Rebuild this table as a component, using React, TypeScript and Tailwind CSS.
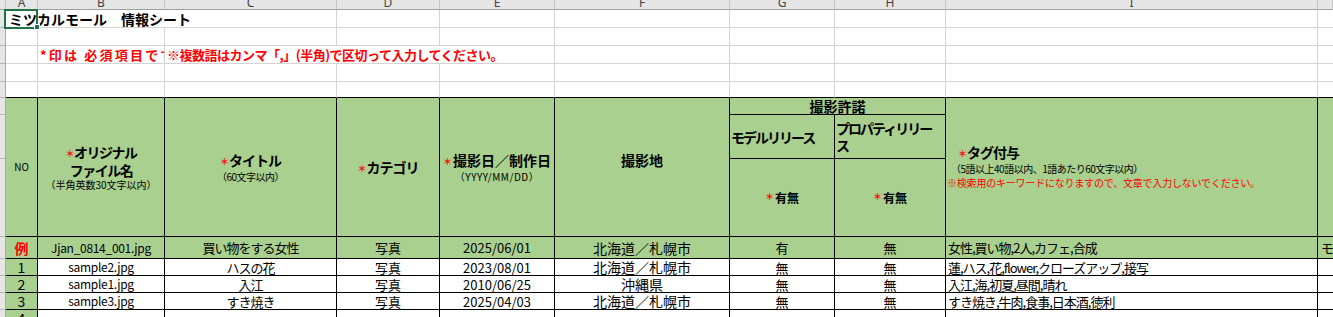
import type { ReactNode } from 'react'

type Row = {
  no: string
  file: string
  title: string
  cat: string
  date: string
  place: string
  model: string
  prop: string
  tags: string
  extra?: string
}

const EXAMPLE: Row = {
  no: '例',
  file: 'Jjan_0814_001.jpg',
  title: '買い物をする女性',
  cat: '写真',
  date: '2025/06/01',
  place: '北海道／札幌市',
  model: '有',
  prop: '無',
  tags: '女性,買い物,2人,カフェ,合成',
  extra: 'モデル',
}

const ROWS: Row[] = [
  { no: '1', file: 'sample2.jpg', title: 'ハスの花', cat: '写真', date: '2023/08/01', place: '北海道／札幌市', model: '無', prop: '無', tags: '蓮,ハス,花,flower,クローズアップ,接写' },
  { no: '2', file: 'sample1.jpg', title: '入江', cat: '写真', date: '2010/06/25', place: '沖縄県', model: '無', prop: '無', tags: '入江,海,初夏,昼間,晴れ' },
  { no: '3', file: 'sample3.jpg', title: 'すき焼き', cat: '写真', date: '2025/04/03', place: '北海道／札幌市', model: '無', prop: '無', tags: 'すき焼き,牛肉,食事,日本酒,徳利' },
]

const LETTERS = ['A', 'B', 'C', 'D', 'E', 'F', 'G', 'H', 'I', '']

const GRID = 'border-r border-b border-[#d4d4d4]'
const CELL = 'border-r border-b border-black'

function Strip() {
  return <div className="bg-[#e6e6e6] border-r border-b border-r-[#a8a8a8] border-b-[#b4b4b4]" />
}

function Star() {
  return <span className="text-[#ff0000] text-[9px] font-bold mr-[1px] relative -top-[1px]">＊</span>
}

function Blank({ cls = GRID }: { cls?: string }) {
  return <div className={cls} />
}

function HeadCell({ children, className = '' }: { children?: ReactNode; className?: string }) {
  return <div className={`row-span-3 bg-[#a9d08e] ${CELL} flex flex-col items-center justify-center ${className}`}>{children}</div>
}

function DataRow({ row, green }: { row: Row; green?: boolean }) {
  const bg = green ? 'bg-[#a9d08e]' : 'bg-white'
  const td = `${CELL} ${bg} flex items-center justify-center whitespace-nowrap overflow-hidden text-[13px] leading-none`
  return (
    <>
      <Strip />
      <div className={`${CELL} bg-[#a9d08e] flex items-center justify-center overflow-hidden text-[14px] leading-none ${row.no === '例' ? 'text-[#ff0000] font-bold' : ''}`}>
        {row.no}
      </div>
      <div className={`${td} !text-[12px] tracking-[-0.3px]`}>{row.file}</div>
      <div className={`${td} tracking-[-1px]`}>{row.title}</div>
      <div className={td}>{row.cat}</div>
      <div className={td}>{row.date}</div>
      <div className={`${td} text-[14px]`}>{row.place}</div>
      <div className={td}>{row.model}</div>
      <div className={td}>{row.prop}</div>
      <div className={`${td} !justify-start pl-[2px] tracking-[-1px]`}>{row.tags}</div>
      <div className={`border-b border-black ${bg} flex items-center pl-[3px] whitespace-nowrap overflow-hidden text-[13px] leading-none`}>
        {row.extra}
      </div>
    </>
  )
}

export default function App() {
  return (
    <div className="relative h-[317px] w-[1333px] overflow-hidden bg-white text-black font-['Noto_Sans_CJK_JP',sans-serif]">
      <div className="grid grid-cols-[6px_32px_127px_172px_103px_115px_175px_105px_111px_372px_1fr] grid-rows-[10px_18px_18px_18px_18px_16px_17px_44px_78px_22px_17px_17px_17px_17px]">
        {/* column letters */}
        <div className="bg-[#e6e6e6] border-r border-b border-r-[#c6c6c6] border-b-[#9e9e9e]" />
        {LETTERS.map((l, i) => (
          <div
            key={i}
            className="bg-[#e6e6e6] border-r border-b border-r-[#c6c6c6] border-b-[#9e9e9e] overflow-hidden flex items-end justify-center font-['Noto_Sans',sans-serif] text-[12px] leading-[12px] text-[#444]"
          >
            {l}
          </div>
        ))}

        {/* row 1 */}
        <Strip />
        <div className="relative z-10 flex items-center border-b border-[#d4d4d4] pl-[3px] whitespace-nowrap text-[14px] font-bold leading-none">
          ミツカルモール　情報シート
        </div>
        <div className="border-b border-[#d4d4d4]" />
        <Blank /><Blank /><Blank /><Blank /><Blank /><Blank /><Blank />
        <div className="border-b border-[#d4d4d4]" />

        {/* row 2 */}
        <Strip />
        <Blank /><Blank /><Blank /><Blank /><Blank /><Blank /><Blank /><Blank /><Blank />
        <div className="border-b border-[#d4d4d4]" />

        {/* row 3 */}
        <Strip />
        <Blank />
        <div className={`${GRID} flex items-center pl-[2px] whitespace-nowrap overflow-hidden text-[13px] font-bold text-[#ff0000] leading-none tracking-[2.2px]`}>
          *印は 必須項目です。
        </div>
        <div className="relative z-10 border-b border-[#d4d4d4] flex items-center pl-[2px] whitespace-nowrap text-[13px] font-bold text-[#ff0000] leading-none tracking-[-0.5px]">
          ※複数語はカンマ「,」(半角)で区切って入力してください。
        </div>
        <div className="border-b border-[#d4d4d4]" />
        <Blank /><Blank /><Blank /><Blank /><Blank />
        <div className="border-b border-[#d4d4d4]" />

        {/* row 4 */}
        <Strip />
        <Blank /><Blank /><Blank /><Blank /><Blank /><Blank /><Blank /><Blank /><Blank />
        <div className="border-b border-[#d4d4d4]" />

        {/* row 5 */}
        <Strip />
        {Array.from({ length: 9 }).map((_, i) => (
          <div key={i} className="border-r border-b border-r-[#d4d4d4] border-b-black" />
        ))}
        <div className="border-b border-black" />

        {/* header */}
        <Strip />
        <HeadCell>
          <span className="text-[10px] leading-none">NO</span>
        </HeadCell>
        <HeadCell className="pt-[2px]">
          <span className="text-[14px] font-bold leading-[17px] tracking-[-1.5px]"><Star />オリジナル</span>
          <span className="text-[14px] font-bold leading-[15px] tracking-[-1.5px]">ファイル名</span>
          <span className="text-[10px] leading-[14px]">（半角英数30文字以内）</span>
        </HeadCell>
        <HeadCell className="pt-[2px]">
          <span className="text-[14px] font-bold leading-[15px] tracking-[-1px]"><Star />タイトル</span>
          <span className="text-[10px] leading-[14px] tracking-[-0.5px]">（60文字以内）</span>
        </HeadCell>
        <HeadCell>
          <span className="text-[14px] font-bold leading-none tracking-[-1px]"><Star />カテゴリ</span>
        </HeadCell>
        <HeadCell className="pt-[2px]">
          <span className="text-[14px] font-bold leading-[15px]"><Star />撮影日／制作日</span>
          <span className="text-[10px] leading-[14px] tracking-[0.5px]">（YYYY/MM/DD）</span>
        </HeadCell>
        <HeadCell className="pb-[14px]">
          <span className="text-[14px] font-bold leading-none">撮影地</span>
        </HeadCell>
        <div className={`col-span-2 bg-[#a9d08e] ${CELL} flex items-center justify-center text-[14px] font-bold leading-none`}>
          撮影許諾
        </div>
        <div className={`row-span-3 bg-[#a9d08e] ${CELL} flex flex-col justify-center pt-[1px]`}>
          <span className="ml-[12px] text-[14px] font-bold leading-[15px] tracking-[-1px]"><Star />タグ付与</span>
          <span className="ml-[5px] text-[10px] leading-[14px] tracking-[-0.5px]">（5語以上40語以内、1語あたり60文字以内）</span>
          <span className="ml-[1px] text-[10px] leading-[14px] text-[#ff0000] tracking-[-0.2px]">※検索用のキーワードになりますので、文章で入力しないでください。</span>
        </div>
        <div className="row-span-3 bg-[#a9d08e] border-b border-black" />

        <Strip />
        <div className={`bg-[#a9d08e] ${CELL} flex items-center pl-[1px] text-[14px] font-bold leading-none tracking-[-2px] whitespace-nowrap`}>
          モデルリリース
        </div>
        <div className={`bg-[#a9d08e] ${CELL} flex flex-col justify-center pl-[1px] text-[14px] font-bold leading-[17px] tracking-[-2px]`}>
          <span>プロパティリリー</span>
          <span>ス</span>
        </div>

        <Strip />
        <div className={`bg-[#a9d08e] ${CELL} flex items-center justify-center text-[12px] font-bold leading-none`}>
          <Star />有無
        </div>
        <div className={`bg-[#a9d08e] ${CELL} flex items-center justify-center text-[12px] font-bold leading-none`}>
          <Star />有無
        </div>

        {/* data */}
        <DataRow row={EXAMPLE} green />
        {ROWS.map(r => (
          <DataRow key={r.no} row={r} />
        ))}
        <DataRow row={{ no: '4', file: '', title: '', cat: '', date: '', place: '', model: '', prop: '', tags: '' }} />
      </div>

      {/* active cell A1 */}
      <div className="absolute left-[4px] top-[9px] h-[20px] w-[34px] border-2 border-[#217346] z-20" />
      <div className="absolute left-[34px] top-[24px] h-[6px] w-[6px] bg-[#217346] border border-white z-30" />
    </div>
  )
}
